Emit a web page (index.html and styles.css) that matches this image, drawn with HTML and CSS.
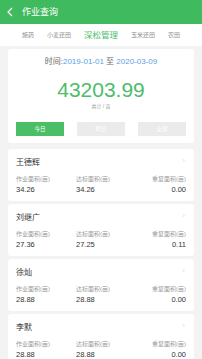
FILE: index.html
```html
<!DOCTYPE html>
<html lang="zh">
<head>
<meta charset="utf-8">
<link rel="stylesheet" href="styles.css">
</head>
<body>
<div class="app">
  <header class="topbar">
    <svg class="back" width="6" height="10" viewBox="0 0 6 10"><polyline points="5,1 1,5 5,9" fill="none" stroke="#fff" stroke-width="1.2"/></svg>
    <span class="title">作业查询</span>
  </header>
  <nav class="tabs">
    <span class="tab">施药</span>
    <span class="tab">小麦还田</span>
    <span class="tab active">深松管理</span>
    <span class="tab">玉米还田</span>
    <span class="tab">农田</span>
  </nav>
  <section class="card summary">
    <div class="period">时间:<span class="date">2019-01-01</span> 至 <span class="date">2020-03-09</span></div>
    <div class="total">43203.99</div>
    <div class="unit">共计 / 亩</div>
    <div class="btns">
      <span class="btn on">今日</span>
      <span class="btn">昨日</span>
      <span class="btn">全部</span>
    </div>
  </section>
  <section class="card person">
    <div class="name-row"><span class="name">王德辉</span><span class="chev">›</span></div>
    <div class="grid">
      <span class="lbl">作业面积(亩)</span><span class="lbl">达标面积(亩)</span><span class="lbl r">重复面积(亩)</span>
      <span class="val">34.26</span><span class="val">34.26</span><span class="val r">0.00</span>
    </div>
  </section>
  <section class="card person">
    <div class="name-row"><span class="name">刘继广</span><span class="chev">›</span></div>
    <div class="grid">
      <span class="lbl">作业面积(亩)</span><span class="lbl">达标面积(亩)</span><span class="lbl r">重复面积(亩)</span>
      <span class="val">27.36</span><span class="val">27.25</span><span class="val r">0.11</span>
    </div>
  </section>
  <section class="card person">
    <div class="name-row"><span class="name">徐灿</span><span class="chev">›</span></div>
    <div class="grid">
      <span class="lbl">作业面积(亩)</span><span class="lbl">达标面积(亩)</span><span class="lbl r">重复面积(亩)</span>
      <span class="val">28.88</span><span class="val">28.88</span><span class="val r">0.00</span>
    </div>
  </section>
  <section class="card person">
    <div class="name-row"><span class="name">李默</span><span class="chev">›</span></div>
    <div class="grid">
      <span class="lbl">作业面积(亩)</span><span class="lbl">达标面积(亩)</span><span class="lbl r">重复面积(亩)</span>
      <span class="val">28.88</span><span class="val">28.88</span><span class="val r">0.00</span>
    </div>
  </section>
</div>
</body>
</html>
```
FILE: styles.css
```css
* { box-sizing: border-box; margin: 0; padding: 0; }
html, body { width: 202px; height: 359px; overflow: hidden; }
body {
  background: #f3f3f3;
  font-family: "Liberation Sans", "Noto Sans CJK SC", sans-serif;
  color: #333;
}
.app { display: flex; flex-direction: column; }
.topbar {
  height: 24px;
  background: #3fba5e;
  display: flex;
  align-items: center;
  padding-left: 7px;
  gap: 9px;
}
.back { display: block; }
.title { color: #fff; font-size: 9px; line-height: 12px; }
.tabs {
  height: 22px;
  background: #fff;
  display: flex;
  justify-content: center;
  align-items: center;
  gap: 13px;
}
.tab { font-size: 6px; line-height: 10px; color: #8c8c8c; }
.tab.active { font-size: 8.5px; color: #4cbd6a; }
.card {
  background: #fff;
  margin: 0 8px;
  border-radius: 3px;
}
.summary {
  margin-top: 3px;
  padding: 8px 8px 7px;
  display: flex;
  flex-direction: column;
  align-items: center;
}
.period { font-size: 8px; line-height: 10px; color: #666; }
.date { color: #5b9fe3; }
.total {
  margin-top: 11px;
  font-size: 21px;
  line-height: 24px;
  color: #4dbd6b;
}
.unit { font-size: 5px; line-height: 6px; color: #999; margin-top: 1px; }
.btns {
  margin-top: 13px;
  align-self: stretch;
  display: flex;
  justify-content: space-between;
}
.btn {
  width: 48px;
  height: 14px;
  background: #ebebeb;
  color: #fff;
  font-size: 5.5px;
  display: flex;
  align-items: center;
  justify-content: center;
}
.btn.on { background: #4cbf66; }
.person {
  margin-top: 6px;
  padding: 9px 8px 7px;
}
.person + .person { margin-top: 3px; }
.name-row { display: flex; justify-content: space-between; align-items: center; height: 10px; }
.name { font-size: 8px; line-height: 10px; color: #333; }
.chev { font-size: 8px; line-height: 10px; color: #ddd; margin-right: 1px; margin-top: -4px; }
.grid {
  margin-top: 7px;
  display: grid;
  grid-template-columns: 60px 1fr 1fr;
  row-gap: 2px;
}
.lbl { font-size: 6px; line-height: 8px; color: #999; }
.val { font-size: 7.5px; line-height: 9px; color: #333; }
.r { text-align: right; }
```
